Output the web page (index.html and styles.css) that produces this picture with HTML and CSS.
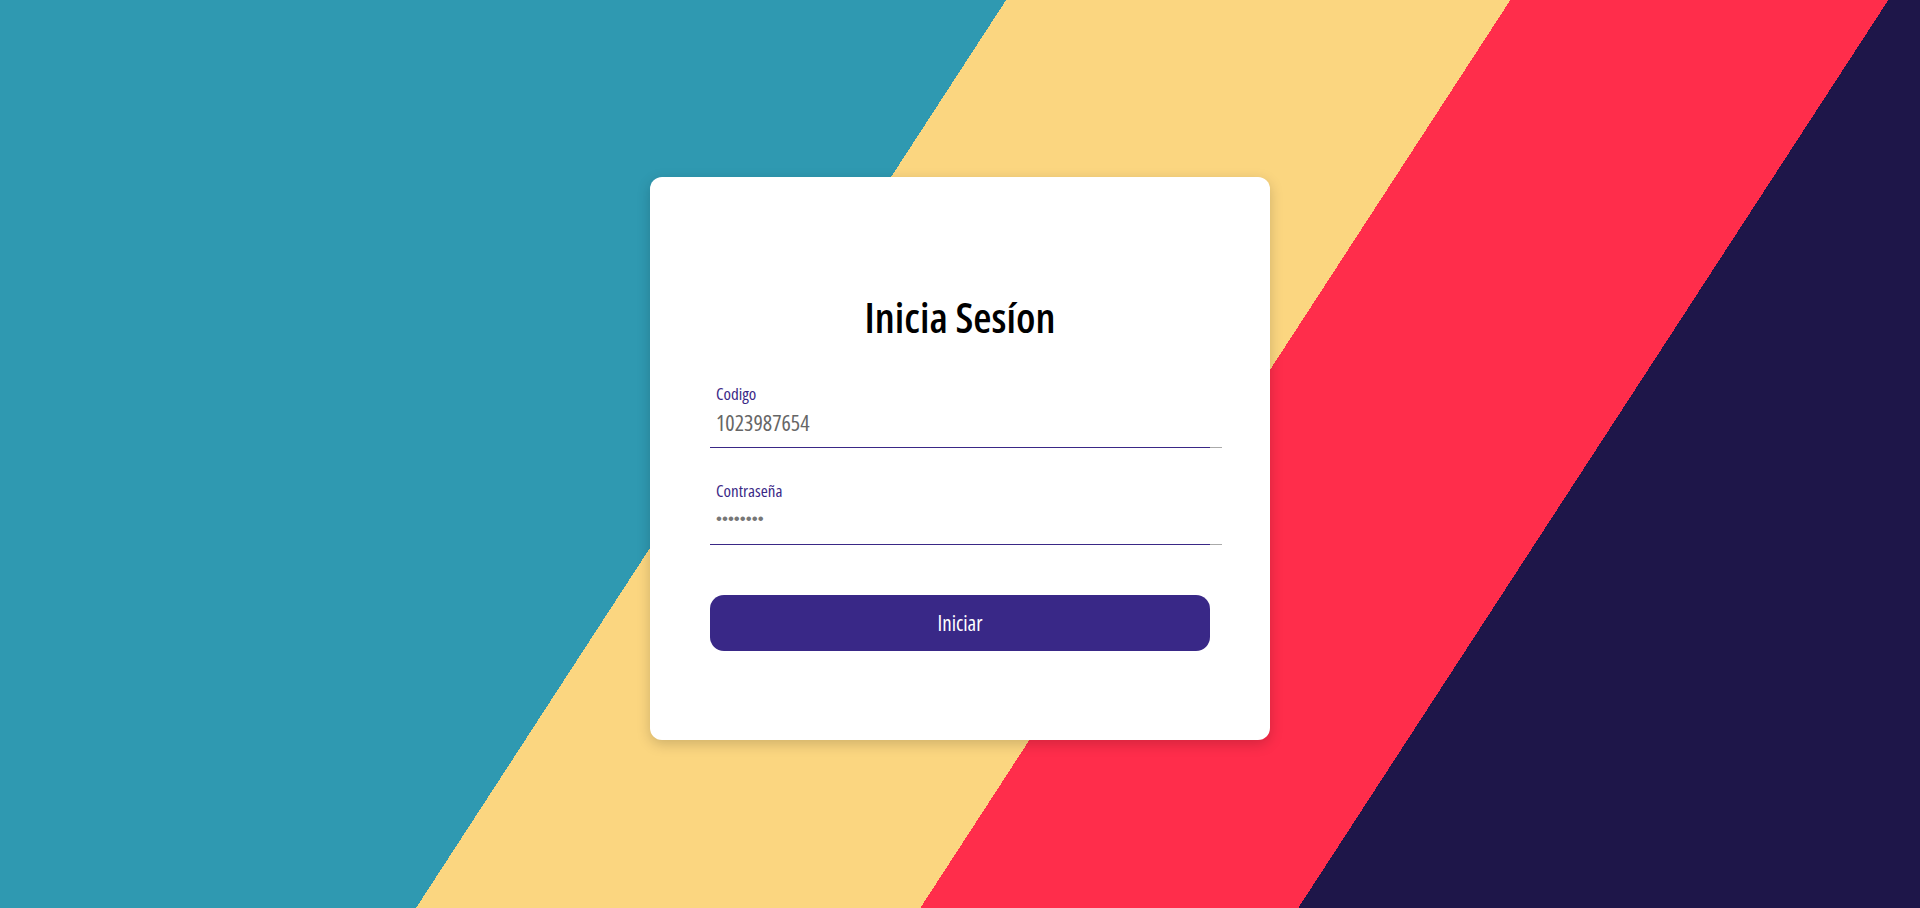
FILE: index.html
```html
<!DOCTYPE html>
<html lang="es">
<head>
<meta charset="utf-8">
<title>Inicia Sesíon</title>
<link rel="stylesheet" href="styles.css">
</head>
<body>
<main class="page">
  <form class="card">
    <h1 class="title">Inicia Sesíon</h1>
    <div class="field">
      <label class="label" for="codigo">Codigo</label>
      <input class="input" id="codigo" type="text" value="1023987654">
      <div class="bar"></div>
    </div>
    <div class="field">
      <label class="label" for="pass">Contraseña</label>
      <input class="input input-pass" id="pass" type="password" value="12345678">
      <div class="bar"></div>
    </div>
    <button class="btn" type="button">Iniciar</button>
  </form>
</main>
</body>
</html>
```
FILE: styles.css
```css
html, body {
  margin: 0;
  padding: 0;
  height: 100%;
}
body {
  font-family: "Open Sans", "Liberation Sans", sans-serif;
  font-stretch: 75%;
  background: linear-gradient(123.02deg,
    #2f99b1 0px, #2f99b1 843.6px,
    #fbd680 843.6px, #fbd680 1266.4px,
    #ff2d4b 1266.4px, #ff2d4b 1583.3px,
    #1e1649 1583.3px, #1e1649 100%);
}
.page {
  height: 908px;
  box-sizing: border-box;
  padding-top: 8px;
  display: flex;
  align-items: center;
  justify-content: center;
}
.card {
  width: 500px;
  background: #fff;
  border-radius: 12px;
  box-shadow: 0 4px 14px rgba(0, 0, 0, 0.18);
  padding: 115px 60px 89px 60px;
  display: flex;
  flex-direction: column;
}
.title {
  margin: 0 0 42px 0;
  font-size: 42px;
  line-height: 50px;
  font-weight: 600;
  font-stretch: 75%;
  text-align: center;
  color: #000;
}
.field {
  display: flex;
  flex-direction: column;
  margin-bottom: 33px;
}
.field + .field {
  margin-bottom: 50px;
}
.label {
  font-size: 17px;
  font-stretch: 75%;
  line-height: 19px;
  color: #3a2886;
  padding-left: 6px;
  margin-bottom: 7px;
}
.input {
  box-sizing: content-box;
  width: 100%;
  font-family: inherit;
  font-stretch: 75%;
  font-size: 22px;
  line-height: 24px;
  height: 24px;
  color: #666;
  border: 0;
  border-bottom: 1px solid #aaa;
  padding: 0 6px 13px 6px;
  margin: 0;
  outline: none;
  background: transparent;
}
.input-pass {
  font-family: "Liberation Sans", sans-serif;
  font-size: 17px;
  letter-spacing: 0;
  color: #777;
}
.bar {
  height: 1px;
  width: 100%;
  margin-top: -1px;
  background: #3a2886;
}
.btn {
  height: 56px;
  border: 0;
  border-radius: 14px;
  background: #392887;
  color: #fff;
  font-family: inherit;
  font-stretch: 75%;
  font-size: 21px;
  cursor: pointer;
}
```
